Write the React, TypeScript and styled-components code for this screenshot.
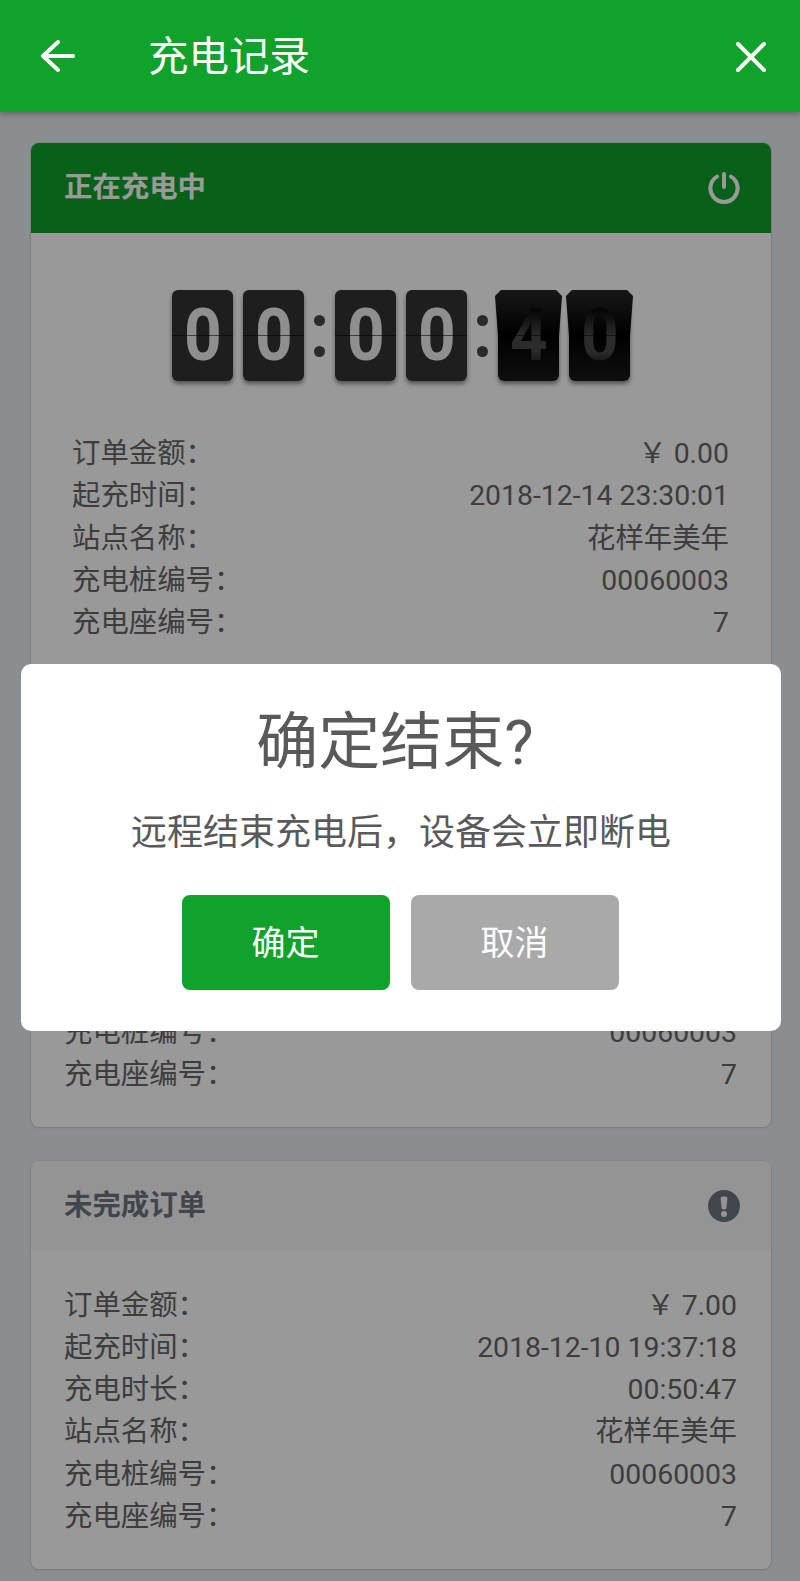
import styled, { createGlobalStyle } from "styled-components";

const GlobalStyle = createGlobalStyle`
    html, body {
        margin: 0;
        padding: 0;
    }

    body {
        font-family: Roboto, "Noto Sans CJK SC", sans-serif;
    }

    * {
        box-sizing: border-box;
    }
`;

const Page = styled.div`
    position: relative;
    width: 800px;
    height: 1581px;
    overflow: hidden;
    background: #e8edf0;
`;

const AppBar = styled.header`
    position: relative;
    z-index: 3;
    display: flex;
    align-items: center;
    height: 112px;
    padding: 2px 34px 0 40px;
    background: #10a22a;
    box-shadow: 0 2px 6px rgba(0, 0, 0, 0.3);
`;

const AppTitle = styled.h1`
    flex: 1;
    margin: 0 0 0 72px;
    font-size: 40.5px;
    font-weight: 400;
    line-height: 56px;
    color: #fff;
`;

const CardList = styled.main`
    display: flex;
    flex-direction: column;
    gap: 34px;
    padding: 31px 29px 0 31px;
`;

const Card = styled.section`
    background: #fff;
    border-radius: 8px;
    box-shadow: 0 0 0 1px rgba(0, 0, 0, 0.06), 0 1px 3px rgba(0, 0, 0, 0.1);
    overflow: hidden;
`;

const CardHead = styled.div<{ $active?: boolean }>`
    display: flex;
    align-items: center;
    justify-content: space-between;
    height: 90px;
    padding: 0 31px 0 33px;
    background: ${(p) => (p.$active ? "#10a22a" : "#f7f7f7")};
    color: ${(p) => (p.$active ? "#fff" : "#6c757d")};
`;

const CardTitle = styled.h2`
    margin: 0;
    font-size: 28.4px;
    font-weight: 700;
    line-height: 40px;
`;

const Clock = styled.div`
    display: flex;
    justify-content: center;
    gap: 10px;
    padding-top: 57px;
`;

const Digit = styled.div<{ $flip?: boolean }>`
    position: relative;
    display: flex;
    align-items: center;
    justify-content: center;
    width: 61px;
    height: 91px;
    border-radius: 6px;
    background: ${(p) => (p.$flip ? "linear-gradient(#000 50%, #1a1a1a)" : "#323232")};
    box-shadow: 0 3px 4px rgba(0, 0, 0, 0.45);
    color: #eeeeee;
    font-size: 73px;
    font-weight: 700;
    line-height: 91px;

    &::before {
        content: "";
        display: ${(p) => (p.$flip ? "block" : "none")};
        position: absolute;
        top: 0;
        left: -3px;
        right: -3px;
        height: 46px;
        background: linear-gradient(#262626, #000);
        clip-path: polygon(6px 0, calc(100% - 6px) 0, 100% 6px, calc(100% - 3px) 100%, 3px 100%, 0 6px);
    }

    &::after {
        content: "";
        position: absolute;
        z-index: 2;
        top: 45px;
        left: 0;
        right: 0;
        height: 1px;
        background: rgba(0, 0, 0, 0.55);
    }
`;

const DigitText = styled.span<{ $flip?: boolean }>`
    position: relative;
    z-index: 1;
    transform: scaleX(0.9);
    ${(p) =>
        p.$flip &&
        `
        background: linear-gradient(#0a0a0a 22%, #484848 50%, #484848 68%, #141414 84%);
        -webkit-background-clip: text;
        background-clip: text;
        color: transparent;
    `}
`;

const Colon = styled.div`
    display: flex;
    flex-direction: column;
    justify-content: center;
    gap: 20px;
    width: 11px;

    &::before,
    &::after {
        content: "";
        width: 11px;
        height: 11px;
        border-radius: 50%;
        background: #464646;
    }
`;

const Rows = styled.dl<{ $wide?: boolean }>`
    margin: 0;
    padding: ${(p) => (p.$wide ? "52px 42px 40.75px 41px" : "33.6px 34px 30.9px 33px")};
`;

const Row = styled.div`
    display: flex;
    justify-content: space-between;
    height: 42.25px;
    font-size: 28.4px;
    line-height: 42.25px;
    color: #666666;
`;

const Label = styled.dt`
    margin: 0;
`;

const Value = styled.dd`
    margin: 0;
`;

const Overlay = styled.div`
    position: absolute;
    inset: 0;
    z-index: 2;
    padding: 664px 19px 0 21px;
    background: rgba(0, 0, 0, 0.4);
`;

const Dialog = styled.div`
    display: flex;
    flex-direction: column;
    align-items: center;
    height: 367px;
    padding-top: 39px;
    border-radius: 10px;
    background: #fff;
    color: #595959;
`;

const DialogTitle = styled.h3`
    margin: 0 12px 0 0;
    font-size: 62px;
    font-weight: 400;
    line-height: 80px;
`;

const DialogText = styled.p`
    margin: 25px 0 0;
    font-size: 36px;
    line-height: 50px;
`;

const Actions = styled.div`
    display: flex;
    gap: 21px;
    margin: 37px 2px 0 0;
`;

const ActionButton = styled.button<{ $primary?: boolean }>`
    width: 208px;
    height: 95px;
    padding: 0 0 4px;
    border: 0;
    border-radius: 8px;
    background: ${(p) => (p.$primary ? "#10a22a" : "#a9a9a9")};
    color: #fff;
    font-family: inherit;
    font-size: 34px;
`;

const BackIcon = () => (
    <svg width="36" height="34" viewBox="0 0 36 34" fill="none" stroke="#fff" strokeWidth="4" strokeLinecap="round" strokeLinejoin="round">
        <path d="M33 16H3M18 2 3 16l15 14" />
    </svg>
);

const CloseIcon = () => (
    <svg width="30" height="30" viewBox="0 0 30 30" fill="none" stroke="#fff" strokeWidth="4" strokeLinecap="round">
        <path d="M2 2l26 26M28 2 2 28" />
    </svg>
);

const PowerIcon = () => (
    <svg width="32" height="32" viewBox="0 0 32 32" fill="none" stroke="currentColor" strokeWidth="4" strokeLinecap="round">
        <path d="M9 4.64a13.6 13.6 0 1 0 14 0" />
        <path d="M16 2v13" />
    </svg>
);

const AlertIcon = () => (
    <svg width="32" height="32" viewBox="0 0 32 32">
        <circle cx="16" cy="16" r="16" fill="currentColor" />
        <path d="M12.6 8.5a2 2 0 0 1 2-2h2.8a2 2 0 0 1 2 2L18.4 18a1.5 1.5 0 0 1-1.5 1.4h-1.8a1.5 1.5 0 0 1-1.5-1.4z" fill="#f7f7f7" />
        <circle cx="16" cy="24" r="3" fill="#f7f7f7" />
    </svg>
);

const activeRows = [
    ["订单金额：", "￥ 0.00"],
    ["起充时间：", "2018-12-14 23:30:01"],
    ["站点名称：", "花样年美年"],
    ["充电桩编号：", "00060003"],
    ["充电座编号：", "7"],
];

const openRows = (start: string, length: string, amount: string) => [
    ["订单金额：", amount],
    ["起充时间：", start],
    ["充电时长：", length],
    ["站点名称：", "花样年美年"],
    ["充电桩编号：", "00060003"],
    ["充电座编号：", "7"],
];

const DetailRows = ({ rows, wide }: { rows: string[][]; wide?: boolean }) => (
    <Rows $wide={wide}>
        {rows.map(([label, value]) => (
            <Row key={label}>
                <Label>{label}</Label>
                <Value>{value}</Value>
            </Row>
        ))}
    </Rows>
);

const OpenOrder = ({ rows }: { rows: string[][] }) => (
    <Card>
        <CardHead>
            <CardTitle>未完成订单</CardTitle>
            <AlertIcon />
        </CardHead>
        <DetailRows rows={rows} />
    </Card>
);

const App = () => {
    return (
        <Page>
            <GlobalStyle />
            <AppBar>
                <BackIcon />
                <AppTitle>充电记录</AppTitle>
                <CloseIcon />
            </AppBar>
            <CardList>
                <Card>
                    <CardHead $active>
                        <CardTitle>正在充电中</CardTitle>
                        <PowerIcon />
                    </CardHead>
                    <Clock>
                        <Digit><DigitText>0</DigitText></Digit>
                        <Digit><DigitText>0</DigitText></Digit>
                        <Colon />
                        <Digit><DigitText>0</DigitText></Digit>
                        <Digit><DigitText>0</DigitText></Digit>
                        <Colon />
                        <Digit $flip><DigitText $flip>4</DigitText></Digit>
                        <Digit $flip><DigitText $flip>0</DigitText></Digit>
                    </Clock>
                    <DetailRows rows={activeRows} wide />
                </Card>
                <OpenOrder rows={openRows("2018-12-10 19:37:18", "00:50:47", "￥ 7.00")} />
                <OpenOrder rows={openRows("2018-12-10 19:37:18", "00:50:47", "￥ 7.00")} />
            </CardList>
            <Overlay>
                <Dialog>
                    <DialogTitle>确定结束?</DialogTitle>
                    <DialogText>远程结束充电后，设备会立即断电</DialogText>
                    <Actions>
                        <ActionButton $primary>确定</ActionButton>
                        <ActionButton>取消</ActionButton>
                    </Actions>
                </Dialog>
            </Overlay>
        </Page>
    );
};

export default App;
